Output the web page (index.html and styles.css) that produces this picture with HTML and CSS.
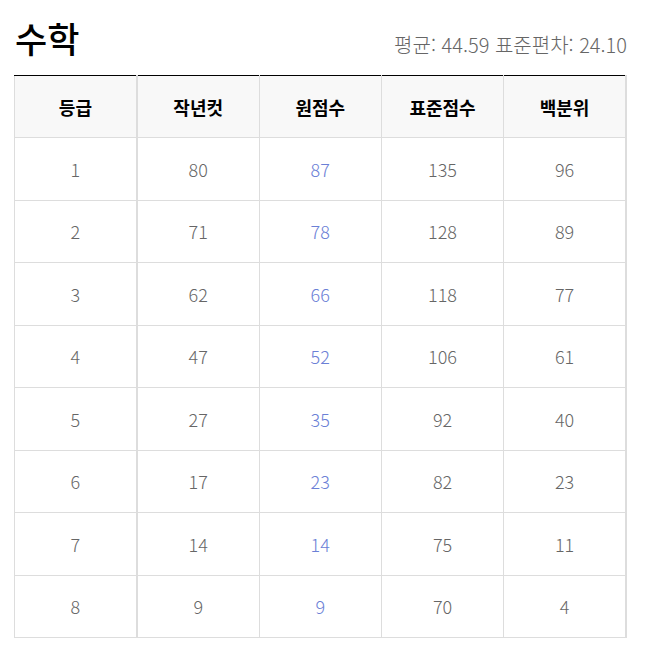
FILE: index.html
```html
<!DOCTYPE html>
<html lang="ko">
<head>
<meta charset="utf-8">
<link rel="stylesheet" href="styles.css">
</head>
<body>
<div class="wrap">
  <div class="head">
    <h1 class="title">수학</h1>
    <div class="stats">평균: 44.59 표준편차: 24.10</div>
  </div>
  <table class="grade">
    <thead>
      <tr><th class="first">등급</th><th>작년컷</th><th>원점수</th><th>표준점수</th><th class="last">백분위</th></tr>
    </thead>
    <tbody>
      <tr><td class="first">1</td><td>80</td><td class="raw">87</td><td>135</td><td class="last">96</td></tr>
      <tr><td class="first">2</td><td>71</td><td class="raw">78</td><td>128</td><td class="last">89</td></tr>
      <tr><td class="first">3</td><td>62</td><td class="raw">66</td><td>118</td><td class="last">77</td></tr>
      <tr><td class="first">4</td><td>47</td><td class="raw">52</td><td>106</td><td class="last">61</td></tr>
      <tr><td class="first">5</td><td>27</td><td class="raw">35</td><td>92</td><td class="last">40</td></tr>
      <tr><td class="first">6</td><td>17</td><td class="raw">23</td><td>82</td><td class="last">23</td></tr>
      <tr><td class="first">7</td><td>14</td><td class="raw">14</td><td>75</td><td class="last">11</td></tr>
      <tr><td class="first">8</td><td>9</td><td class="raw">9</td><td>70</td><td class="last">4</td></tr>
    </tbody>
  </table>
</div>
</body>
</html>
```
FILE: styles.css
```css
html, body { margin: 0; padding: 0; background: #fff; }
body { font-family: "Noto Sans CJK KR", "Noto Sans", sans-serif; }
.wrap { padding: 14px 28px 0 14px; }
.head { display: flex; justify-content: space-between; align-items: flex-end; height: 61px; }
.title { margin: 0; font-size: 35px; font-weight: 500; color: #000; line-height: 48px; padding-left: 1px; align-self: flex-start; }
.stats { font-size: 20px; font-weight: 300; color: #666; line-height: 26px; margin-bottom: 17px; }
.grade { width: 613px; border-collapse: collapse; table-layout: fixed; border-top: 1px solid #000; }
.grade th, .grade td { border: 1px solid #ddd; text-align: center; padding: 0; }
.grade thead th { border-top: 1px solid #000; background: #f8f8f8; height: 61px; font-size: 18px; font-weight: 700; color: #000; }
.grade td { height: 61.5px; font-size: 18px; font-weight: 300; color: #666; }
.grade .first { border-right: 2px solid #ddd; }
.grade .last { border-right: 2px solid #ddd; }
.grade td.raw { color: #6b80d6; }
```
